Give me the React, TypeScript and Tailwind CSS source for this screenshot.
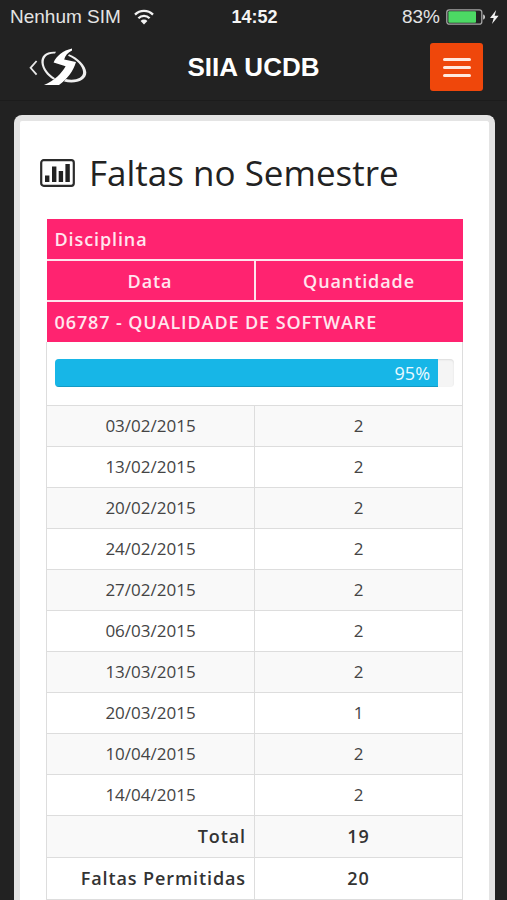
import React from "react";

const absences = [
  { date: "03/02/2015", count: 2 },
  { date: "13/02/2015", count: 2 },
  { date: "20/02/2015", count: 2 },
  { date: "24/02/2015", count: 2 },
  { date: "27/02/2015", count: 2 },
  { date: "06/03/2015", count: 2 },
  { date: "13/03/2015", count: 2 },
  { date: "20/03/2015", count: 1 },
  { date: "10/04/2015", count: 2 },
  { date: "14/04/2015", count: 2 },
];

const totals = [
  { label: "Total", value: 19 },
  { label: "Faltas Permitidas", value: 20 },
];

function StatusBar() {
  return (
    <div className="grid h-[34px] grid-cols-3 items-center pr-2 pl-[10px] text-[19px] leading-6 text-[#e4e4e4]">
      <div className="flex items-center gap-3 whitespace-nowrap">
        <span>Nenhum SIM</span>
        <svg width="22" height="16" viewBox="0 0 22 16" fill="none" stroke="#f2f2f2" aria-hidden="true">
          <path d="M2 5.6a12.6 12.6 0 0 1 18 0" strokeWidth="2.3" />
          <path d="M5.4 9.2a7.8 7.8 0 0 1 11.2 0" strokeWidth="2.3" />
          <path d="M11 15.4 7.6 12a4.8 4.8 0 0 1 6.8 0z" fill="#f2f2f2" stroke="none" />
        </svg>
      </div>
      <div className="text-center text-[18px] font-bold text-[#f4f4f4]">14:52</div>
      <div className="flex items-center justify-end gap-[6px]">
        <span>83%</span>
        <svg width="53" height="18" viewBox="0 0 53 18" aria-hidden="true">
          <rect x="0.8" y="1.8" width="35" height="14.4" rx="2.5" fill="none" stroke="#a5a5a5" strokeWidth="1.3" />
          <rect x="2.4" y="3.2" width="27.6" height="11.6" rx="1" fill="#4cd964" />
          <path d="M37.2 6.5c2.4.6 2.4 4.4 0 5z" fill="#d5d5d5" />
          <path d="M50.2 2 44 9.9h3.7L46 16l6.6-8.2h-4z" fill="#f2f2f2" />
        </svg>
      </div>
    </div>
  );
}

function Header() {
  return (
    <header className="grid h-[67px] grid-cols-[1fr_auto_1fr] items-center border-b border-[#1c1c1c] px-6">
      <a href="#voltar" aria-label="Voltar" className="ml-1 justify-self-start">
        <svg width="60" height="40" viewBox="0 0 60 40" fill="none" aria-hidden="true">
          <path d="M8.6 14 2.6 20.8l6 6.8" stroke="#e8e8e8" strokeWidth="1.8" />
          <path
            fillRule="evenodd"
            fill="#efefef"
            d="M28 4.800C18 4 13 8.500 13.400 15.600c.5 7 6 13.400 11.800 17l2-1.400C21 27.400 16 21.600 15.700 16 15.400 10 19.600 6.200 27 6.600z"
          />
          <path
            fill="#efefef"
            d="M41 7.200c9 3.600 16.800 11.200 17.300 18 .5 8.400-11.400 12.200-22.300 9.200l1.800-2.400c8.800 2 17.600-.7 17.300-7C54.700 19.400 48.600 12.200 40 8.800z"
          />
          <path
            fill="#fff"
            d="M44 1.500C35 3.500 28.500 8.800 25.600 15.600L37.600 19.200c-4 7.200-11.100 14.400-21.600 18.800h15c8.100-5.800 14.500-14 17-23L36.200 12.400c1-3.700 3.600-6.800 7.800-8.800z"
          />
        </svg>
      </a>
      <h1 className="text-[26px] leading-8 font-bold text-white">SIIA UCDB</h1>
      <button
        type="button"
        aria-label="Menu"
        className="flex h-12 w-[53px] flex-col items-center justify-center gap-[5px] justify-self-end rounded-[3px] bg-[#ef470b]"
      >
        <span className="h-[3px] w-7 rounded-full bg-[#ffe9df]" />
        <span className="h-[3px] w-7 rounded-full bg-[#ffe9df]" />
        <span className="h-[3px] w-7 rounded-full bg-[#ffe9df]" />
      </button>
    </header>
  );
}

function ChartIcon() {
  return (
    <svg width="35" height="28" viewBox="0 0 35 28" aria-hidden="true">
      <rect x="1.2" y="1.2" width="32.6" height="25.6" rx="2.5" fill="none" stroke="#2b2b2b" strokeWidth="2.2" />
      <path fill="#222" d="M5 16.500h4.400V23H5zM12 7.500h4.400V23H12zM18.700 12h4.400v11h-4.400zM25.400 5h4.400v18h-4.400z" />
    </svg>
  );
}

export default function App() {
  return (
    <div className="flex min-h-screen flex-col bg-[#222222] font-['Liberation_Sans',Arial,sans-serif]">
      <StatusBar />
      <Header />
      <main className="mt-[14px] mr-3 ml-[14px] flex-1 rounded-t-lg border-6 border-b-0 border-[#e4e4e4] bg-white px-[26px] pt-7 font-['Open_Sans',sans-serif]">
        <div className="-ml-[6px] flex items-center gap-[14px]">
          <ChartIcon />
          <h2 className="text-[35px] leading-[48px] text-[#222222]">Faltas no Semestre</h2>
        </div>
        <table className="mt-[22px] w-full table-fixed border-collapse text-[17px] leading-6 text-[#444444]">
          <thead className="bg-[#ff2370] text-lg leading-6 tracking-wider text-[#ffe6ee]">
            <tr className="h-[41px]">
              <th colSpan={2} scope="colgroup" className="border-b-2 border-[#ffe3ec] px-2 text-left font-semibold">
                Disciplina
              </th>
            </tr>
            <tr className="h-[41px]">
              <th scope="col" className="border-r-2 border-b-2 border-[#ffe3ec] px-2 font-semibold">
                Data
              </th>
              <th scope="col" className="border-b-2 border-[#ffe3ec] px-2 font-semibold">
                Quantidade
              </th>
            </tr>
            <tr className="h-[41px]">
              <th colSpan={2} scope="colgroup" className="px-2 text-left font-semibold">
                06787 - QUALIDADE DE SOFTWARE
              </th>
            </tr>
          </thead>
          <tbody>
            <tr className="h-[63px]">
              <td colSpan={2} className="border-x border-b border-[#dddddd] px-2">
                <div
                  role="progressbar"
                  aria-label="Faltas utilizadas"
                  aria-valuenow={95}
                  aria-valuemin={0}
                  aria-valuemax={100}
                  className="h-7 overflow-hidden rounded-sm bg-[#f5f5f5] shadow-[inset_0_1px_2px_rgba(0,0,0,0.1)]"
                >
                  <div className="h-full w-[96%] bg-[#17b6e7] pr-2 text-right text-lg leading-7 text-[#e9f9ff] shadow-[inset_0_-1px_0_rgba(0,0,0,0.15)]">
                    95%
                  </div>
                </div>
              </td>
            </tr>
            {absences.map((item) => (
              <tr key={item.date} className="h-[41px] odd:bg-white even:bg-[#f9f9f9]">
                <td className="border border-[#dddddd] px-2 text-center">{item.date}</td>
                <td className="border border-[#dddddd] px-2 text-center">{item.count}</td>
              </tr>
            ))}
          </tbody>
          <tfoot className="text-lg leading-6 tracking-wider text-[#333333]">
            {totals.map((item) => (
              <tr key={item.label} className="h-[42px] odd:bg-[#f9f9f9] even:bg-white">
                <th scope="row" className="border border-[#dddddd] px-2 text-right font-semibold">
                  {item.label}
                </th>
                <td className="border border-[#dddddd] px-2 text-center font-semibold">{item.value}</td>
              </tr>
            ))}
          </tfoot>
        </table>
      </main>
    </div>
  );
}
